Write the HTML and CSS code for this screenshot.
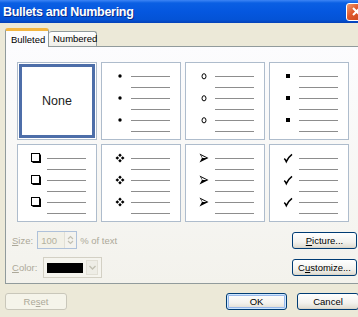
FILE: index.html
```html
<!DOCTYPE html>
<html lang="en">
<head>
  <title>Bullets and Numbering</title>
  <meta charset="utf-8">
  <link rel="stylesheet" href="styles.css">
</head>
<body>
  <div class="dialog">
    <div class="titlebar">
      <span class="title">Bullets and Numbering</span>
      <span class="close">
        <svg width="11" height="11" viewBox="0 0 11 11"><path d="M2 2 L9 9 M9 2 L2 9" stroke="#fff" stroke-width="2"/></svg>
      </span>
    </div>

    <div class="content">
      <div class="tabs">
        <div class="tab active">Bulleted</div>
        <div class="tab">Numbered</div>
      </div>

      <div class="panel">
        <div class="gallery">
          <div class="cell none selected">None</div>

          <div class="cell">
            <div class="marks">
              <span class="mark"><svg width="12" height="12" viewBox="0 0 12 12"><circle cx="6" cy="6" r="1.7" fill="#000"/></svg></span>
              <span class="mark"><svg width="12" height="12" viewBox="0 0 12 12"><circle cx="6" cy="6" r="1.7" fill="#000"/></svg></span>
              <span class="mark"><svg width="12" height="12" viewBox="0 0 12 12"><circle cx="6" cy="6" r="1.7" fill="#000"/></svg></span>
            </div>
            <div class="lines"></div>
          </div>

          <div class="cell">
            <div class="marks">
              <span class="mark"><svg width="12" height="12" viewBox="0 0 12 12"><ellipse cx="6" cy="6.3" rx="2" ry="2.6" fill="none" stroke="#000" stroke-width="1"/></svg></span>
              <span class="mark"><svg width="12" height="12" viewBox="0 0 12 12"><ellipse cx="6" cy="6.3" rx="2" ry="2.6" fill="none" stroke="#000" stroke-width="1"/></svg></span>
              <span class="mark"><svg width="12" height="12" viewBox="0 0 12 12"><ellipse cx="6" cy="6.3" rx="2" ry="2.6" fill="none" stroke="#000" stroke-width="1"/></svg></span>
            </div>
            <div class="lines"></div>
          </div>

          <div class="cell">
            <div class="marks">
              <span class="mark"><svg width="12" height="12" viewBox="0 0 12 12"><rect x="4" y="4" width="4" height="4" fill="#000"/></svg></span>
              <span class="mark"><svg width="12" height="12" viewBox="0 0 12 12"><rect x="4" y="4" width="4" height="4" fill="#000"/></svg></span>
              <span class="mark"><svg width="12" height="12" viewBox="0 0 12 12"><rect x="4" y="4" width="4" height="4" fill="#000"/></svg></span>
            </div>
            <div class="lines"></div>
          </div>

          <div class="cell">
            <div class="marks">
              <span class="mark"><svg width="12" height="12" viewBox="0 0 12 12"><rect x="1.5" y="1.5" width="8" height="8" fill="#fff" stroke="#000"/><path d="M10 2.5 V10 H2.5" fill="none" stroke="#000" stroke-width="2"/></svg></span>
              <span class="mark"><svg width="12" height="12" viewBox="0 0 12 12"><rect x="1.5" y="1.5" width="8" height="8" fill="#fff" stroke="#000"/><path d="M10 2.5 V10 H2.5" fill="none" stroke="#000" stroke-width="2"/></svg></span>
              <span class="mark"><svg width="12" height="12" viewBox="0 0 12 12"><rect x="1.5" y="1.5" width="8" height="8" fill="#fff" stroke="#000"/><path d="M10 2.5 V10 H2.5" fill="none" stroke="#000" stroke-width="2"/></svg></span>
            </div>
            <div class="lines"></div>
          </div>

          <div class="cell">
            <div class="marks">
              <span class="mark"><svg width="12" height="12" viewBox="0 0 12 12"><path d="M6 1.5 L7.8 3.3 L6 5.1 L4.2 3.3Z M6 6.9 L7.8 8.7 L6 10.5 L4.2 8.7Z M3.3 4.2 L5.1 6 L3.3 7.8 L1.5 6Z M8.7 4.2 L10.5 6 L8.7 7.8 L6.9 6Z" fill="#000"/></svg></span>
              <span class="mark"><svg width="12" height="12" viewBox="0 0 12 12"><path d="M6 1.5 L7.8 3.3 L6 5.1 L4.2 3.3Z M6 6.9 L7.8 8.7 L6 10.5 L4.2 8.7Z M3.3 4.2 L5.1 6 L3.3 7.8 L1.5 6Z M8.7 4.2 L10.5 6 L8.7 7.8 L6.9 6Z" fill="#000"/></svg></span>
              <span class="mark"><svg width="12" height="12" viewBox="0 0 12 12"><path d="M6 1.5 L7.8 3.3 L6 5.1 L4.2 3.3Z M6 6.9 L7.8 8.7 L6 10.5 L4.2 8.7Z M3.3 4.2 L5.1 6 L3.3 7.8 L1.5 6Z M8.7 4.2 L10.5 6 L8.7 7.8 L6.9 6Z" fill="#000"/></svg></span>
            </div>
            <div class="lines"></div>
          </div>

          <div class="cell">
            <div class="marks">
              <span class="mark"><svg width="12" height="12" viewBox="0 0 12 12"><path d="M1.5 1.5 L10.5 6 L1.5 10.5 L4 6Z" fill="#000"/><path d="M3 3.2 L8.6 6 L4.6 6Z" fill="#fff"/></svg></span>
              <span class="mark"><svg width="12" height="12" viewBox="0 0 12 12"><path d="M1.5 1.5 L10.5 6 L1.5 10.5 L4 6Z" fill="#000"/><path d="M3 3.2 L8.6 6 L4.6 6Z" fill="#fff"/></svg></span>
              <span class="mark"><svg width="12" height="12" viewBox="0 0 12 12"><path d="M1.5 1.5 L10.5 6 L1.5 10.5 L4 6Z" fill="#000"/><path d="M3 3.2 L8.6 6 L4.6 6Z" fill="#fff"/></svg></span>
            </div>
            <div class="lines"></div>
          </div>

          <div class="cell">
            <div class="marks">
              <span class="mark"><svg width="12" height="12" viewBox="0 0 12 12"><path d="M2.2 6.6 Q3.4 7.4 4.3 9.6 Q6.5 5 10 2.4" fill="none" stroke="#000" stroke-width="1.5"/></svg></span>
              <span class="mark"><svg width="12" height="12" viewBox="0 0 12 12"><path d="M2.2 6.6 Q3.4 7.4 4.3 9.6 Q6.5 5 10 2.4" fill="none" stroke="#000" stroke-width="1.5"/></svg></span>
              <span class="mark"><svg width="12" height="12" viewBox="0 0 12 12"><path d="M2.2 6.6 Q3.4 7.4 4.3 9.6 Q6.5 5 10 2.4" fill="none" stroke="#000" stroke-width="1.5"/></svg></span>
            </div>
            <div class="lines"></div>
          </div>
        </div>

        <div class="options">
          <div class="field">
            <span class="label"><u>S</u>ize:</span>
            <span class="spin">
              <span class="spin-value">100</span>
              <span class="spin-arrows">
                <svg width="9" height="12" viewBox="0 0 9 12"><path d="M2 5 L4.5 2.5 L7 5 M2 7 L4.5 9.5 L7 7" fill="none" stroke="#c2c0b2" stroke-width="1.2"/></svg>
              </span>
            </span>
            <span class="label">% of text</span>
          </div>
          <button class="btn side"><u>P</u>icture...</button>

          <div class="field">
            <span class="label"><u>C</u>olor:</span>
            <span class="picker">
              <span class="swatch"></span>
              <span class="drop">
                <svg width="9" height="7" viewBox="0 0 9 7"><path d="M1.5 2 L4.5 5 L7.5 2" fill="none" stroke="#c2c0b2" stroke-width="1.4"/></svg>
              </span>
            </span>
          </div>
          <button class="btn side">C<u>u</u>stomize...</button>
        </div>
      </div>

      <div class="footer">
        <button class="btn disabled">Re<u>s</u>et</button>
        <div class="footer-right">
          <button class="btn default">OK</button>
          <button class="btn">Cancel</button>
        </div>
      </div>
    </div>
  </div>
</body>
</html>
```

FILE: styles.css
```css
* {
  box-sizing: border-box;
}

body {
  margin: 0;
  overflow: hidden;
  background-color: #ece9d8;
  font-family: "Liberation Sans", Arial, sans-serif;
  font-size: 9.5px;
  color: #000;
}

.dialog {
  width: 370px;
}

/* Title bar */
.titlebar {
  height: 23px;
  display: flex;
  align-items: center;
  padding: 0 3px 0 3px;
  background: linear-gradient(#3d85f5 0, #0a5fe3 3px, #0557df 50%, #0453d6 85%, #0441b7 100%);
}

.title {
  color: white;
  font-weight: bold;
  font-size: 12.5px;
  letter-spacing: -0.3px;
  text-shadow: 1px 1px 0 #0a2a8a;
}

.close {
  margin-left: auto;
  width: 21px;
  height: 18px;
  display: flex;
  align-items: center;
  justify-content: center;
  border: 1px solid #fff;
  border-radius: 3px;
  background: linear-gradient(135deg, #f09a72 0, #e0582c 40%, #c3401c 100%);
}

.content {
  padding: 0 5px;
}

/* Tabs */
.tabs {
  display: flex;
  align-items: flex-end;
  height: 18px;
  margin-top: 5px;
}

.tab {
  height: 15px;
  padding: 0 4px;
  line-height: 14px;
  border: 1px solid #919b9c;
  border-bottom: none;
  border-radius: 3px 3px 0 0;
  background: linear-gradient(#ffffff, #f0efe9);
}

.tab.active {
  position: relative;
  z-index: 1;
  height: 19px;
  margin-bottom: -1px;
  width: 44px;
  padding: 0 5px;
  line-height: 17px;
  border-top: 3px solid #f3b640;
  border-left: 1px solid #919b9c;
  border-right: 1px solid #919b9c;
  background: #fcfcfe;
}

.tab + .tab {
  width: 48px;
  border-left: none;
}

/* Panel */
.panel {
  height: 238px;
  border: 1px solid #919b9c;
  background: linear-gradient(#fcfcfe, #f3f2ec);
  padding-top: 15px;
}

.gallery {
  display: grid;
  grid-template-columns: repeat(4, 80px);
  grid-auto-rows: 78px;
  gap: 4px;
  margin-left: 11px;
}

.cell {
  border: 1px solid #aebccc;
  background: white;
  display: flex;
  gap: 5px;
  padding: 7px 0 0 12px;
}

.cell.none {
  align-items: center;
  justify-content: center;
  padding: 0;
  font-size: 12.5px;
  color: #222;
}

.cell.selected {
  box-shadow: inset 0 0 0 1px #fff, inset 0 0 0 4px #4d6ea9;
}

.marks {
  width: 12px;
  display: flex;
  flex-direction: column;
  gap: 10px;
}

.mark {
  height: 12px;
  display: flex;
}

.lines {
  width: 39px;
  height: 66px;
  margin-top: 1px;
  background: repeating-linear-gradient(to bottom, transparent 0, transparent 5px, #8d8d8d 5px, #8d8d8d 6px, transparent 6px, transparent 11px);
}

/* Options below the gallery */
.options {
  display: grid;
  grid-template-columns: 1fr 65px;
  row-gap: 8px;
  margin-top: 9px;
  padding: 0 7px 0 6px;
  align-items: center;
}

.field {
  display: flex;
  align-items: center;
  gap: 3px;
}

.label {
  color: #aca899;
}

.spin {
  width: 40px;
  height: 18px;
  display: flex;
  align-items: center;
  border: 1px solid #aec1da;
  background: #f2f1e8;
  margin-left: 1px;
}

.spin-value {
  flex: 1;
  padding-left: 3px;
  color: #b3b09c;
}

.spin-arrows {
  width: 12px;
  height: 16px;
  display: flex;
  align-items: center;
  justify-content: center;
  background: #f4f3ee;
  border-left: 1px solid #e2e0d6;
}

.picker {
  width: 59px;
  height: 21px;
  margin-left: 3px;
  display: flex;
  align-items: center;
  gap: 3px;
  padding: 0 3px;
  border: 1px solid #d3d0c4;
  background: #f5f4ee;
}

.swatch {
  width: 38px;
  height: 10px;
  background: #000;
}

.drop {
  width: 13px;
  height: 15px;
  display: flex;
  align-items: center;
  justify-content: center;
  background: #eeede6;
  border: 1px solid #e1dfd5;
}

/* Buttons */
.btn {
  height: 17px;
  padding: 0;
  font-family: inherit;
  font-size: 9.5px;
  color: #000;
  border: 1px solid #003c74;
  border-radius: 3px;
  background: linear-gradient(#ffffff, #f3f2ee 60%, #e3e0d6 90%, #d6d0c5);
}

.btn.side {
  width: 65px;
}

.footer {
  display: flex;
  justify-content: space-between;
  margin-top: 9px;
}

.footer .btn {
  width: 62px;
}

.footer-right {
  display: flex;
  gap: 10px;
  margin-right: 6px;
}

.btn.default {
  width: 61px;
  box-shadow: inset 0 0 0 1px #cee7ff, inset 0 0 0 2px #98b8ea;
}

.btn.disabled {
  color: #aca899;
  border-color: #c9c7ba;
  background: #f5f4ea;
}
```
